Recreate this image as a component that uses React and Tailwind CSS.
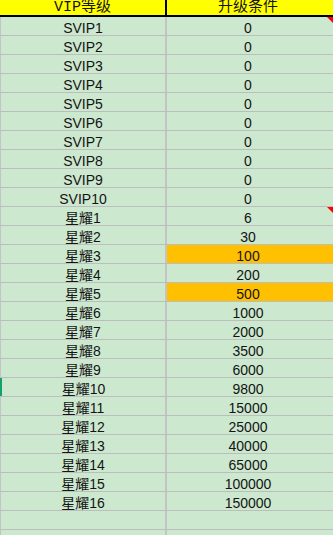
import React from "react";

const rows = [
  ["SVIP1", "0"],
  ["SVIP2", "0"],
  ["SVIP3", "0"],
  ["SVIP4", "0"],
  ["SVIP5", "0"],
  ["SVIP6", "0"],
  ["SVIP7", "0"],
  ["SVIP8", "0"],
  ["SVIP9", "0"],
  ["SVIP10", "0"],
  ["星耀1", "6"],
  ["星耀2", "30"],
  ["星耀3", "100"],
  ["星耀4", "200"],
  ["星耀5", "500"],
  ["星耀6", "1000"],
  ["星耀7", "2000"],
  ["星耀8", "3500"],
  ["星耀9", "6000"],
  ["星耀10", "9800"],
  ["星耀11", "15000"],
  ["星耀12", "25000"],
  ["星耀13", "40000"],
  ["星耀14", "65000"],
  ["星耀15", "100000"],
  ["星耀16", "150000"],
  ["", ""],
  ["", ""],
];

const orange = new Set(["星耀3", "星耀5"]);
const marked = new Set(["SVIP1", "星耀1"]);

export default function App() {
  return (
    <div
      className="w-[333px] h-[535px] overflow-hidden bg-[#cce8cf] text-[#141414]"
      style={{ fontFamily: '"Liberation Sans", "Noto Sans CJK SC", sans-serif' }}
    >
      <div className="flex h-[17px] bg-[#ffff00] border-b-2 border-black">
        <div
          className="w-[167px] shrink-0 border-r-2 border-black flex items-end justify-center text-[15px] leading-[15px]"
          style={{ fontFamily: '"Liberation Mono", "Noto Sans CJK SC", monospace' }}
        >
          VIP等级
        </div>
        <div
          className="flex-1 flex items-end justify-center text-[15px] leading-[15px] pr-[4px]"
          style={{ fontFamily: '"Liberation Mono", "Noto Sans CJK SC", monospace' }}
        >
          升级条件
        </div>
      </div>
      {rows.map(([a, b], i) => (
        <div key={i} className="flex h-[19px] border-b border-[#bdbdbd]">
          <div
            className={
              "w-[167px] shrink-0 border-r-2 border-[#c4c4c4] flex items-center justify-center text-[14px] leading-[16px] pt-[3px] " +
              (a === "星耀10" ? "border-l-2 border-l-[#16a06a]" : "border-l border-l-[#c4c4c4]")
            }
          >
            {a}
          </div>
          <div
            className={
              "relative flex-1 flex items-center justify-center text-[14px] leading-[16px] pt-[3px] pr-[4px] " +
              (orange.has(a) ? "bg-[#ffc000]" : "")
            }
          >
            {b}
            {marked.has(a) && (
              <div className="absolute right-0 top-0 w-0 h-0 border-t-[6px] border-t-[#ff0000] border-l-[6px] border-l-transparent" />
            )}
          </div>
        </div>
      ))}
    </div>
  );
}
